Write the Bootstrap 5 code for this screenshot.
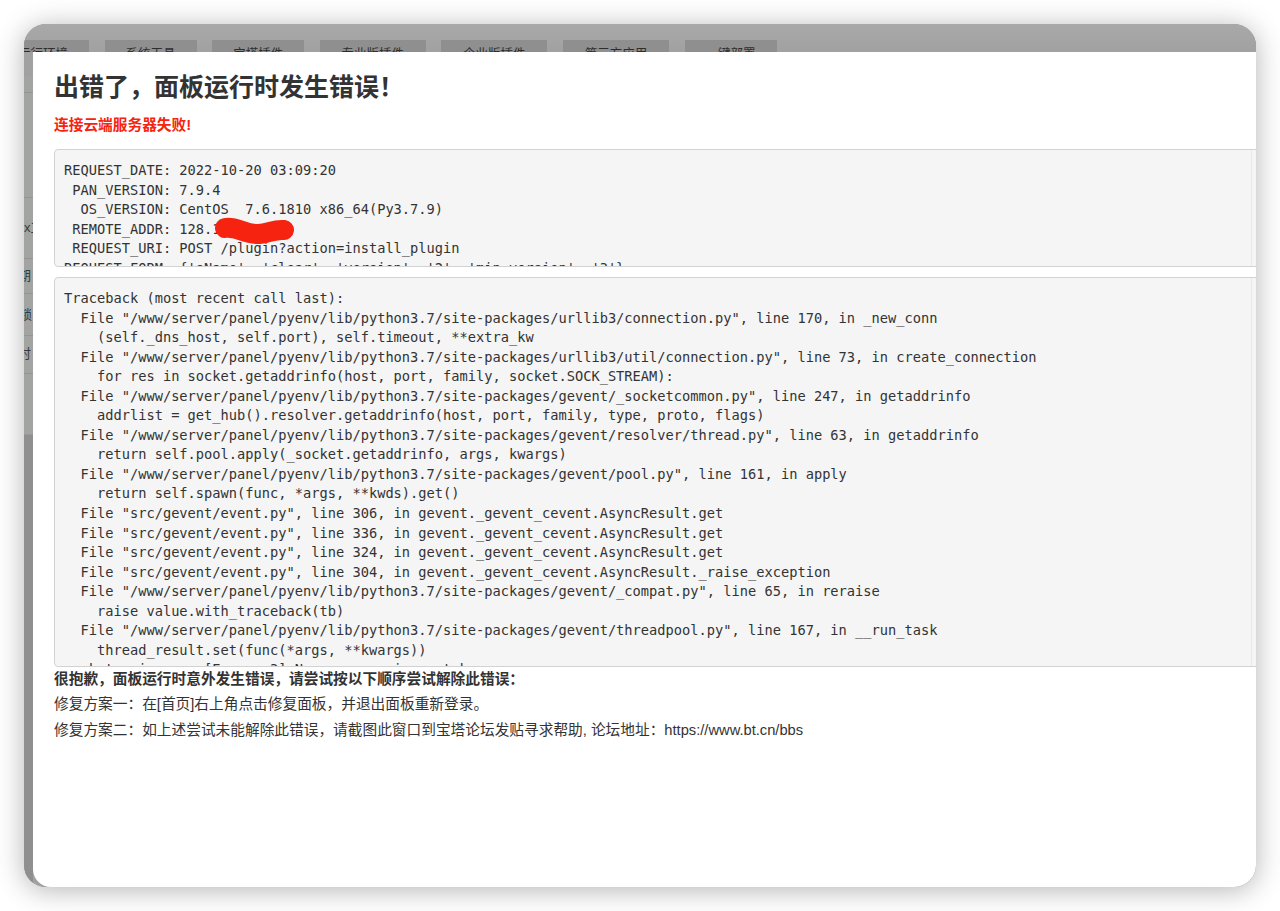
<!DOCTYPE html>
<html lang="zh-CN">
<head>
<meta charset="utf-8">
<title>错误</title>
<link href="https://cdn.jsdelivr.net/npm/bootstrap@5.3.0/dist/css/bootstrap.min.css" rel="stylesheet">
<style>
html,body{height:100%;}
body{background:#fff;padding:24px;font-family:"Liberation Sans","Noto Sans CJK SC",sans-serif;overflow:hidden;}
.shot-window{position:relative;height:863px;border-radius:22px;overflow:hidden;background:#8f8f8f;box-shadow:0 3px 28px rgba(0,0,0,.3);}
.under-page{height:100%;background:linear-gradient(#a9a9a9,#a1a1a1 28px);}
.under-tabs{padding:16px 0 0 0;margin-left:-27px;height:28px;overflow:hidden;gap:15.6px;}
.under-tab{width:92px;height:40px;background:#8f8f8f;color:#2e2e2e;font-size:12.5px;text-align:center;line-height:22px;padding-top:3px;flex:none;}
.under-tab-wide{width:106px;}
.under-side{position:absolute;left:0;top:52px;width:9px;bottom:0;background:linear-gradient(#a1a4a1 0,#a1a4a1 358px,#8f8f8f 359px,#8f8f8f 100%);overflow:hidden;}
.side-item{position:absolute;font-size:13px;color:#3a3a3a;line-height:16px;white-space:nowrap;}
.side-line{position:absolute;left:0;right:0;height:1px;background:#949494;}
.err-modal{position:absolute;left:9px;top:28px;right:-40px;bottom:0;background:#fff;padding:0 0 0 21px;border-bottom-left-radius:18px;}
.err-title{font-size:25px;font-weight:700;color:#333;line-height:36px;margin:17px 0 0;}
.err-red{color:#f5230f;font-size:14.7px;font-weight:700;line-height:20px;margin:10px 0 14px;}
.err-pre{font-family:"DejaVu Sans Mono","Liberation Mono",monospace;font-size:13.7px;line-height:19.55px;color:#333;background:linear-gradient(to left,#f5f5f5 43px,#e8e8e8 43px,#e8e8e8 44px,#f5f5f5 44px);border:1px solid #d2d2d2;border-radius:4px;padding:11px 9px;margin:0 0 10px;overflow:hidden;white-space:pre;}
.err-pre-a{height:118px;}
.err-pre-b{height:390px;margin-bottom:0;}
.err-note{font-size:14.7px;line-height:20px;color:#333;margin:0 0 5.4px;}
.err-note-b{font-weight:700;margin-top:2px;}
.redact{position:absolute;left:189px;top:192px;}
</style>
</head>
<body>
<div class="shot-window">
  <div class="under-page">
    <div class="under-tabs d-flex">
      <div class="under-tab">运行环境</div>
      <div class="under-tab">系统工具</div>
      <div class="under-tab">宝塔插件</div>
      <div class="under-tab under-tab-wide">专业版插件</div>
      <div class="under-tab under-tab-wide">企业版插件</div>
      <div class="under-tab under-tab-wide">第三方应用</div>
      <div class="under-tab">一键部署</div>
    </div>
  </div>
  <div class="under-side">
    <div class="side-item" style="top:144px;left:0">x工</div>
    <div class="side-item" style="top:192px;left:-6px">期</div>
    <div class="side-item" style="top:231px;left:-5px">锁</div>
    <div class="side-item" style="top:270px;left:-6px">时</div>
    <div class="side-line" style="top:16px"></div>
    <div class="side-line" style="top:121px"></div>
    <div class="side-line" style="top:182px"></div>
    <div class="side-line" style="top:217px"></div>
    <div class="side-line" style="top:259px"></div>
    <div class="side-line" style="top:297px"></div>
  </div>
  <div class="err-modal">
    <h1 class="err-title">出错了，面板运行时发生错误！</h1>
    <p class="err-red">连接云端服务器失败!</p>
<pre class="err-pre err-pre-a">REQUEST_DATE: 2022-10-20 03:09:20
 PAN_VERSION: 7.9.4
  OS_VERSION: CentOS  7.6.1810 x86_64(Py3.7.9)
 REMOTE_ADDR: 128.1
 REQUEST_URI: POST /plugin?action=install_plugin
REQUEST_FORM: {'sName': 'clear', 'version': '2', 'min_version': '3'}</pre>
<pre class="err-pre err-pre-b">Traceback (most recent call last):
  File "/www/server/panel/pyenv/lib/python3.7/site-packages/urllib3/connection.py", line 170, in _new_conn
    (self._dns_host, self.port), self.timeout, **extra_kw
  File "/www/server/panel/pyenv/lib/python3.7/site-packages/urllib3/util/connection.py", line 73, in create_connection
    for res in socket.getaddrinfo(host, port, family, socket.SOCK_STREAM):
  File "/www/server/panel/pyenv/lib/python3.7/site-packages/gevent/_socketcommon.py", line 247, in getaddrinfo
    addrlist = get_hub().resolver.getaddrinfo(host, port, family, type, proto, flags)
  File "/www/server/panel/pyenv/lib/python3.7/site-packages/gevent/resolver/thread.py", line 63, in getaddrinfo
    return self.pool.apply(_socket.getaddrinfo, args, kwargs)
  File "/www/server/panel/pyenv/lib/python3.7/site-packages/gevent/pool.py", line 161, in apply
    return self.spawn(func, *args, **kwds).get()
  File "src/gevent/event.py", line 306, in gevent._gevent_cevent.AsyncResult.get
  File "src/gevent/event.py", line 336, in gevent._gevent_cevent.AsyncResult.get
  File "src/gevent/event.py", line 324, in gevent._gevent_cevent.AsyncResult.get
  File "src/gevent/event.py", line 304, in gevent._gevent_cevent.AsyncResult._raise_exception
  File "/www/server/panel/pyenv/lib/python3.7/site-packages/gevent/_compat.py", line 65, in reraise
    raise value.with_traceback(tb)
  File "/www/server/panel/pyenv/lib/python3.7/site-packages/gevent/threadpool.py", line 167, in __run_task
    thread_result.set(func(*args, **kwargs))
socket.gaierror: [Errno -3] Name or service not known</pre>
    <p class="err-note err-note-b">很抱歉，面板运行时意外发生错误，请尝试按以下顺序尝试解除此错误：</p>
    <p class="err-note">修复方案一：在[首页]右上角点击修复面板，并退出面板重新登录。</p>
    <p class="err-note">修复方案二：如上述尝试未能解除此错误，请截图此窗口到宝塔论坛发贴寻求帮助, 论坛地址：https://www.bt.cn/bbs</p>
  </div>
  <svg class="redact" width="84" height="30" viewBox="0 0 84 30"><path d="M12 12 C24 10 32 19 46 18 C56 17 62 13 71 14" fill="none" stroke="#f5230f" stroke-width="20" stroke-linecap="round"/></svg>
</div>
<script src="https://cdn.jsdelivr.net/npm/bootstrap@5.3.0/dist/js/bootstrap.bundle.min.js"></script>
</body>
</html>
